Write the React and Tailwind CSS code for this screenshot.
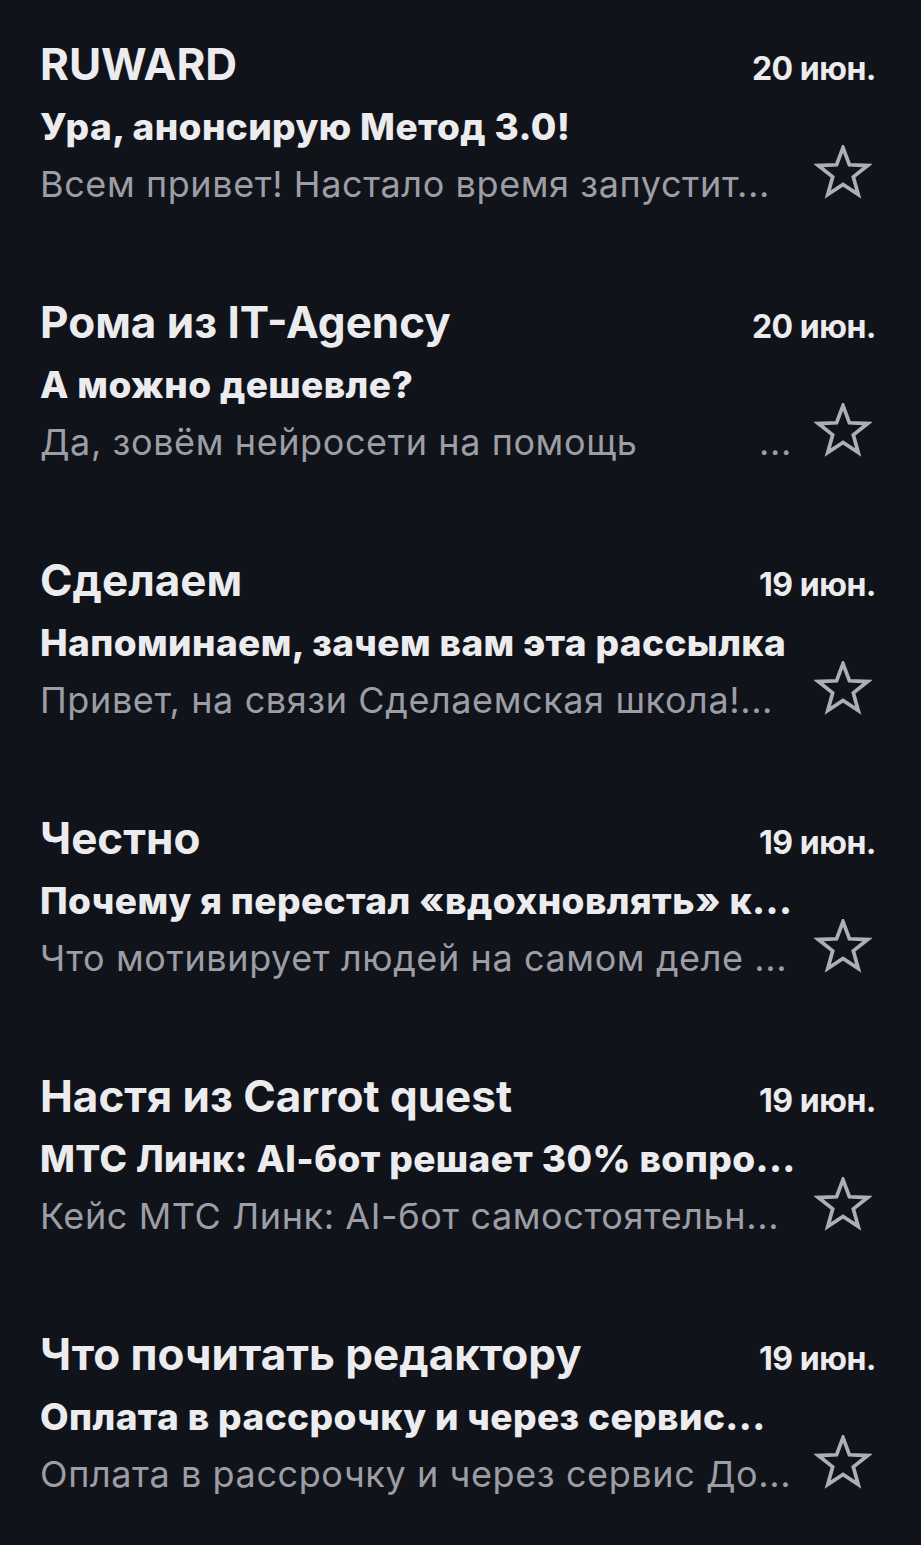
import React from "react";

const items = [
  { from: "RUWARD", date: "20 июн.", subject: "Ура, анонсирую Метод 3.0!", preview: "Всем привет! Настало время запустит..." },
  { from: "Рома из IT-Agency", date: "20 июн.", subject: "А можно дешевле?", preview: "Да, зовём нейросети на помощь", tail: "..." },
  { from: "Сделаем", date: "19 июн.", subject: "Напоминаем, зачем вам эта рассылка", preview: "Привет, на связи Сделаемская школа!..." },
  { from: "Честно", date: "19 июн.", subject: "Почему я перестал «вдохновлять» к...", preview: "Что мотивирует людей на самом деле ..." },
  { from: "Настя из Carrot quest", date: "19 июн.", subject: "МТС Линк: AI-бот решает 30% вопро...", preview: "Кейс МТС Линк: AI-бот самостоятельн..." },
  { from: "Что почитать редактору", date: "19 июн.", subject: "Оплата в рассрочку и через сервис...", preview: "Оплата в рассрочку и через сервис До..." },
];

function Star() {
  return (
    <svg width="58" height="54" viewBox="0 0 56 52" className="shrink-0 -mt-[15px] ml-[22px] mr-[4px]">
      <polygon
        points="28,2.5 34.17,19.01 51.78,19.77 37.99,30.74 42.69,47.73 28,38 13.31,47.73 18.01,30.74 4.22,19.77 21.83,19.01"
        fill="none"
        stroke="#aeaeb4"
        strokeWidth="3.6"
        strokeLinejoin="miter"
      />
    </svg>
  );
}

export default function App() {
  return (
    <div className="min-h-[1545px] w-full bg-[#11131a] pl-[40px] pr-[45px] text-[#ececef]" style={{ fontFamily: "Inter, 'Noto Sans', sans-serif" }}>
      {items.map((it, i) => (
        <div key={i} className="h-[258px] pt-[36px]">
          <div className="flex h-[56px] items-baseline justify-between overflow-visible">
            <div className="text-[44px] font-bold leading-[56px] tracking-[0px] whitespace-nowrap">{it.from}</div>
            <div className="text-[32px] font-bold leading-[56px] tracking-[-0.5px] whitespace-nowrap">{it.date}</div>
          </div>
          <div className="mt-[11px] w-[780px] overflow-hidden whitespace-nowrap text-[37px] font-extrabold leading-[48px] tracking-[0.4px]">
            {it.subject}
          </div>
          <div className="mt-[9px] flex items-start">
            <div className="flex min-w-0 flex-1 justify-between overflow-hidden whitespace-nowrap text-[36px] font-normal leading-[48px] text-[#9d9ea5] tracking-[0.6px]">
              <span>{it.preview}</span>
              {it.tail ? <span>{it.tail}</span> : null}
            </div>
            <Star />
          </div>
        </div>
      ))}
    </div>
  );
}
